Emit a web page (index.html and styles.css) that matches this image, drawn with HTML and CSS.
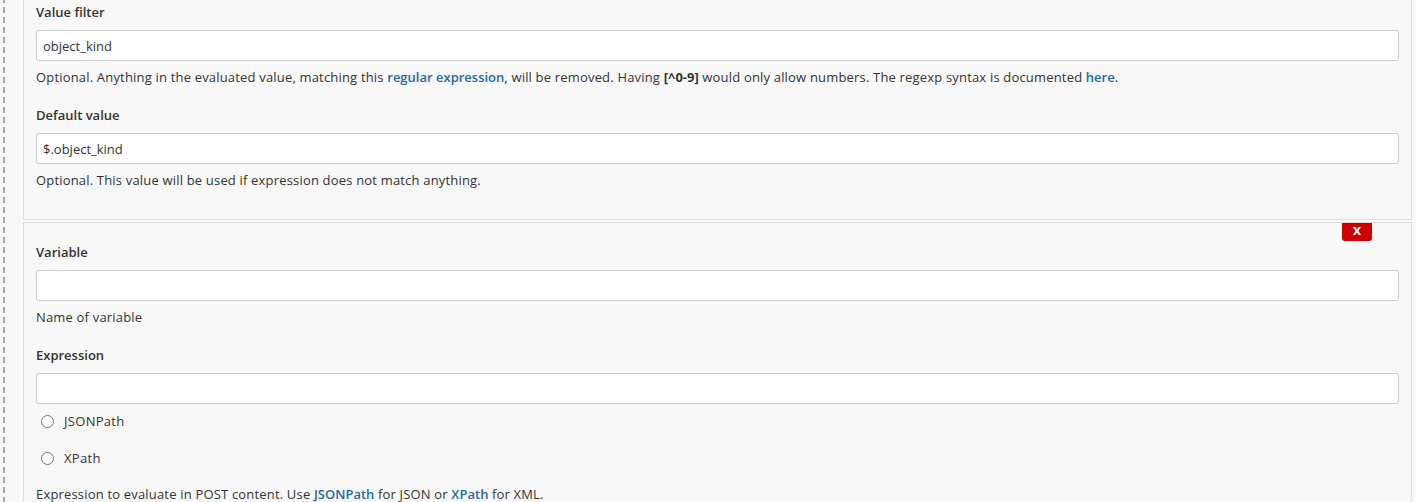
FILE: index.html
```html
<!DOCTYPE html>
<html>
<head>
<meta charset="utf-8">
<link rel="stylesheet" href="styles.css">
</head>
<body>
<div class="page">
  <div class="rail"></div>
  <div class="chunks">
    <div class="chunk chunk-first">
      <div class="field">
        <div class="label">Value filter</div>
        <input class="text-input" type="text" value="object_kind">
        <div class="help">Optional. Anything in the evaluated value, matching this <a class="link">regular expression</a>, will be removed. Having <b class="code">[^0-9]</b> would only allow numbers. The regexp syntax is documented <a class="link">here</a>.</div>
      </div>
      <div class="field">
        <div class="label">Default value</div>
        <input class="text-input" type="text" value="$.object_kind">
        <div class="help">Optional. This value will be used if expression does not match anything.</div>
      </div>
    </div>
    <div class="chunk chunk-second">
      <div class="chunk-toolbar"><button class="delete-btn" type="button">X</button></div>
      <div class="field">
        <div class="label">Variable</div>
        <input class="text-input" type="text" value="">
        <div class="help">Name of variable</div>
      </div>
      <div class="field">
        <div class="label">Expression</div>
        <input class="text-input" type="text" value="">
        <label class="radio-row"><span class="radio"></span><span class="radio-label">JSONPath</span></label>
        <label class="radio-row"><span class="radio"></span><span class="radio-label">XPath</span></label>
        <div class="help help-last">Expression to evaluate in POST content. Use <a class="link">JSONPath</a> for JSON or <a class="link">XPath</a> for XML.</div>
      </div>
    </div>
  </div>
</div>
</body>
</html>
```

FILE: styles.css
```css
* { box-sizing: border-box; }
html, body {
  margin: 0;
  padding: 0;
  background: #f8f8f8;
  height: 502px;
  overflow: hidden;
}
body {
  font-family: "Open Sans", "Noto Sans", sans-serif;
  font-size: 13px;
  color: #333;
}
.page {
  display: flex;
  align-items: stretch;
  min-height: 502px;
}
.rail {
  width: 2px;
  margin-left: 3px;
  flex: none;
  background: repeating-linear-gradient(to bottom, #a8a8a8 0 6px, transparent 6px 10px);
  background-position: 0 -3px;
}
.chunks {
  margin-left: 18px;
  width: 1389px;
  display: flex;
  flex-direction: column;
  gap: 2px;
}
.chunk {
  background: #f8f8f8;
  border: 1px solid #dcdcdc;
  padding: 0 12px;
}
.chunk-first {
  border-top: none;
  padding-top: 3px;
  padding-bottom: 30px;
}
.chunk-second {
  padding-top: 0;
  padding-bottom: 20px;
}
.chunk-toolbar {
  display: flex;
  justify-content: flex-end;
  padding-right: 27px;
  height: 20px;
}
.delete-btn {
  width: 30px;
  height: 18px;
  padding: 0;
  border: none;
  border-radius: 0 0 3px 3px;
  background: #cc0000;
  color: #fff;
  font-family: "DejaVu Sans", sans-serif;
  font-weight: bold;
  font-size: 11px;
  line-height: 18px;
}
.field + .field { margin-top: 20px; }
.label {
  font-weight: 600;
  line-height: 18px;
  height: 18px;
  margin-bottom: 9px;
}
.text-input {
  display: block;
  width: 100%;
  height: 31px;
  border: 1px solid #cccccc;
  border-radius: 3px;
  background: #fff;
  padding: 0 6px;
  font-family: inherit;
  font-size: 13px;
  color: #333;
  outline: none;
}
.help {
  margin-top: 7px;
  line-height: 18px;
  height: 18px;
  white-space: nowrap;
  letter-spacing: 0.18px;
}
.link {
  color: #1f6a9c;
  font-weight: 600;
  text-decoration: none;
  letter-spacing: 0;
}
.code { font-weight: 700; letter-spacing: 0; }
.radio-row {
  display: flex;
  align-items: center;
  height: 18px;
  margin-top: 8px;
  padding-left: 5px;
}
.radio-row + .radio-row { margin-top: 19px; }
.radio {
  width: 13px;
  height: 13px;
  border: 1px solid #767676;
  border-radius: 50%;
  background: #fff;
  flex: none;
}
.radio-label { margin-left: 10px; letter-spacing: 0.3px; }
.help-last { margin-top: 18px; }
```
